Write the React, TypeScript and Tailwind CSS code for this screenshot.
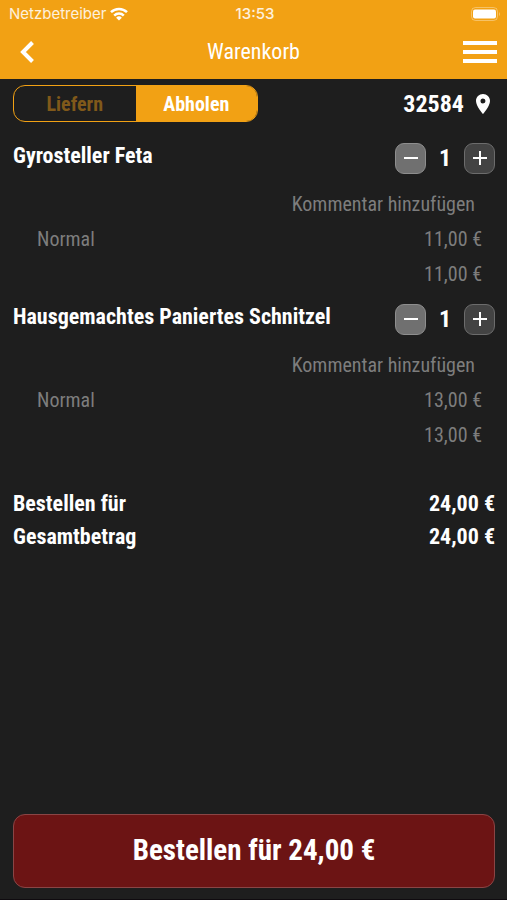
import { useState } from "react";

type Item = {
  name: string;
  variant: string;
  price: number;
};

const items: Item[] = [
  { name: "Gyrosteller Feta", variant: "Normal", price: 11 },
  { name: "Hausgemachtes Paniertes Schnitzel", variant: "Normal", price: 13 },
];

function formatPrice(value: number) {
  return `${value.toFixed(2).replace(".", ",")} €`;
}

function StatusBar() {
  return (
    <div className="grid h-7 grid-cols-3 items-center pr-[6px] pl-[9px] font-['Inter',sans-serif] text-[15px] text-white/85">
      <div className="flex items-center gap-1">
        <span>Netzbetreiber</span>
        <svg viewBox="0 0 18 14" className="h-[14px] w-[18px] shrink-0">
          <g fill="none" stroke="#fff" strokeWidth="2.5">
            <path d="M1 5.2a11.4 11.4 0 0 1 16 0" />
            <path d="M4.2 8.6a6.8 6.8 0 0 1 9.6 0" />
          </g>
          <path d="M9 13.6 6.1 10.7a4.1 4.1 0 0 1 5.8 0z" fill="#fff" />
        </svg>
      </div>
      <span className="text-center font-medium">13:53</span>
      <svg viewBox="0 0 30 14" className="h-[14px] w-[30px] justify-self-end">
        <rect
          x="0.5"
          y="0.5"
          width="26"
          height="13"
          rx="4"
          fill="none"
          stroke="#fff"
          strokeOpacity="0.35"
        />
        <rect x="2" y="2.5" width="23" height="9" rx="2" fill="#fff" />
        <path d="M28 5v4a2.5 2.5 0 0 0 0-4z" fill="#fff" fillOpacity="0.35" />
      </svg>
    </div>
  );
}

function Header() {
  return (
    <header className="bg-[#f2a114] text-white">
      <StatusBar />
      <div className="grid h-[51px] grid-cols-3 items-center px-[10px] pb-1">
        <button type="button" aria-label="Zurück" className="w-9 pl-[10px]">
          <svg viewBox="0 0 15 22" className="h-[22px] w-[15px]">
            <path
              d="M12.5 1.5 3 11l9.5 9.5"
              fill="none"
              stroke="#fff"
              strokeWidth="4"
            />
          </svg>
        </button>
        <h1 className="text-center text-[22px] leading-[26px]">Warenkorb</h1>
        <button type="button" aria-label="Menü" className="justify-self-end">
          <svg viewBox="0 0 34 24" className="h-6 w-[34px]" fill="#fff">
            <path d="M0 1h34v4H0zM0 10h34v4H0zM0 19h34v4H0z" />
          </svg>
        </button>
      </div>
    </header>
  );
}

function Stepper() {
  const [count, setCount] = useState(1);
  return (
    <div className="flex shrink-0 items-center">
      <button
        type="button"
        aria-label="Weniger"
        onClick={() => setCount(Math.max(0, count - 1))}
        className="flex size-[31px] items-center justify-center rounded-[9px] border border-[#8e8e8e] bg-[#707070]"
      >
        <svg viewBox="0 0 14 14" className="size-[14px]">
          <path d="M0 7h14" stroke="#fff" strokeWidth="2" />
        </svg>
      </button>
      <span className="w-[38px] text-center text-2xl font-bold">{count}</span>
      <button
        type="button"
        aria-label="Mehr"
        onClick={() => setCount(count + 1)}
        className="flex size-[31px] items-center justify-center rounded-[9px] border border-[#6c6c6c] bg-[#434343]"
      >
        <svg viewBox="0 0 14 14" className="size-[14px]">
          <path d="M0 7h14M7 0v14" stroke="#fff" strokeWidth="2" />
        </svg>
      </button>
    </div>
  );
}

function CartItem({ item }: { item: Item }) {
  return (
    <li>
      <div className="flex h-[31px] items-start justify-between">
        <h2 className="text-[22px] leading-7 font-bold">{item.name}</h2>
        <Stepper />
      </div>
      <div className="mt-[13px] text-xl text-[#7d7d7d]">
        <div className="flex h-[35px] items-center justify-end pr-5">
          <button type="button">Kommentar hinzufügen</button>
        </div>
        <div className="flex h-[35px] items-center justify-between pr-[13px] pl-6">
          <span>{item.variant}</span>
          <span>{formatPrice(item.price)}</span>
        </div>
        <div className="flex h-[35px] items-center justify-end pr-[13px]">
          {formatPrice(item.price)}
        </div>
      </div>
    </li>
  );
}

export default function App() {
  return (
    <div className="flex min-h-screen flex-col border-b border-[#0f0b0f] bg-[#1e1e1e] font-['Roboto_Condensed','Roboto',sans-serif] text-white">
      <Header />
      <main className="flex flex-1 flex-col pt-[6px] pr-3 pb-[11px] pl-[13px]">
        <div className="flex items-center justify-between">
          <div className="grid h-[37px] w-[245px] grid-cols-2 overflow-hidden rounded-xl border border-[#f2a114] text-xl font-bold">
            <button type="button" className="text-[#80591a]">
              Liefern
            </button>
            <button type="button" className="bg-[#f2a114]">
              Abholen
            </button>
          </div>
          <button
            type="button"
            className="flex items-center gap-3 pr-[5px] text-2xl font-bold"
          >
            32584
            <svg viewBox="5 2 14 20" className="h-5 w-[14px]" fill="#fff">
              <path d="M12 2C8.13 2 5 5.13 5 9c0 5.25 7 13 7 13s7-7.75 7-13c0-3.87-3.13-7-7-7zm0 9.5a2.5 2.5 0 1 1 0-5 2.5 2.5 0 0 1 0 5z" />
            </svg>
          </button>
        </div>

        <ul className="mt-5 flex flex-col gap-3">
          {items.map((item) => (
            <CartItem key={item.name} item={item} />
          ))}
        </ul>

        <dl className="mt-[35px] text-[22px] leading-[33px] font-bold">
          <div className="flex justify-between">
            <dt>Bestellen für</dt>
            <dd>24,00 €</dd>
          </div>
          <div className="flex justify-between">
            <dt>Gesamtbetrag</dt>
            <dd>24,00 €</dd>
          </div>
        </dl>

        <button
          type="button"
          className="mt-auto h-[74px] w-full rounded-xl border border-[#8a4545] bg-[#6c1414] text-[29px] font-bold"
        >
          Bestellen für 24,00 €
        </button>
      </main>
    </div>
  );
}
